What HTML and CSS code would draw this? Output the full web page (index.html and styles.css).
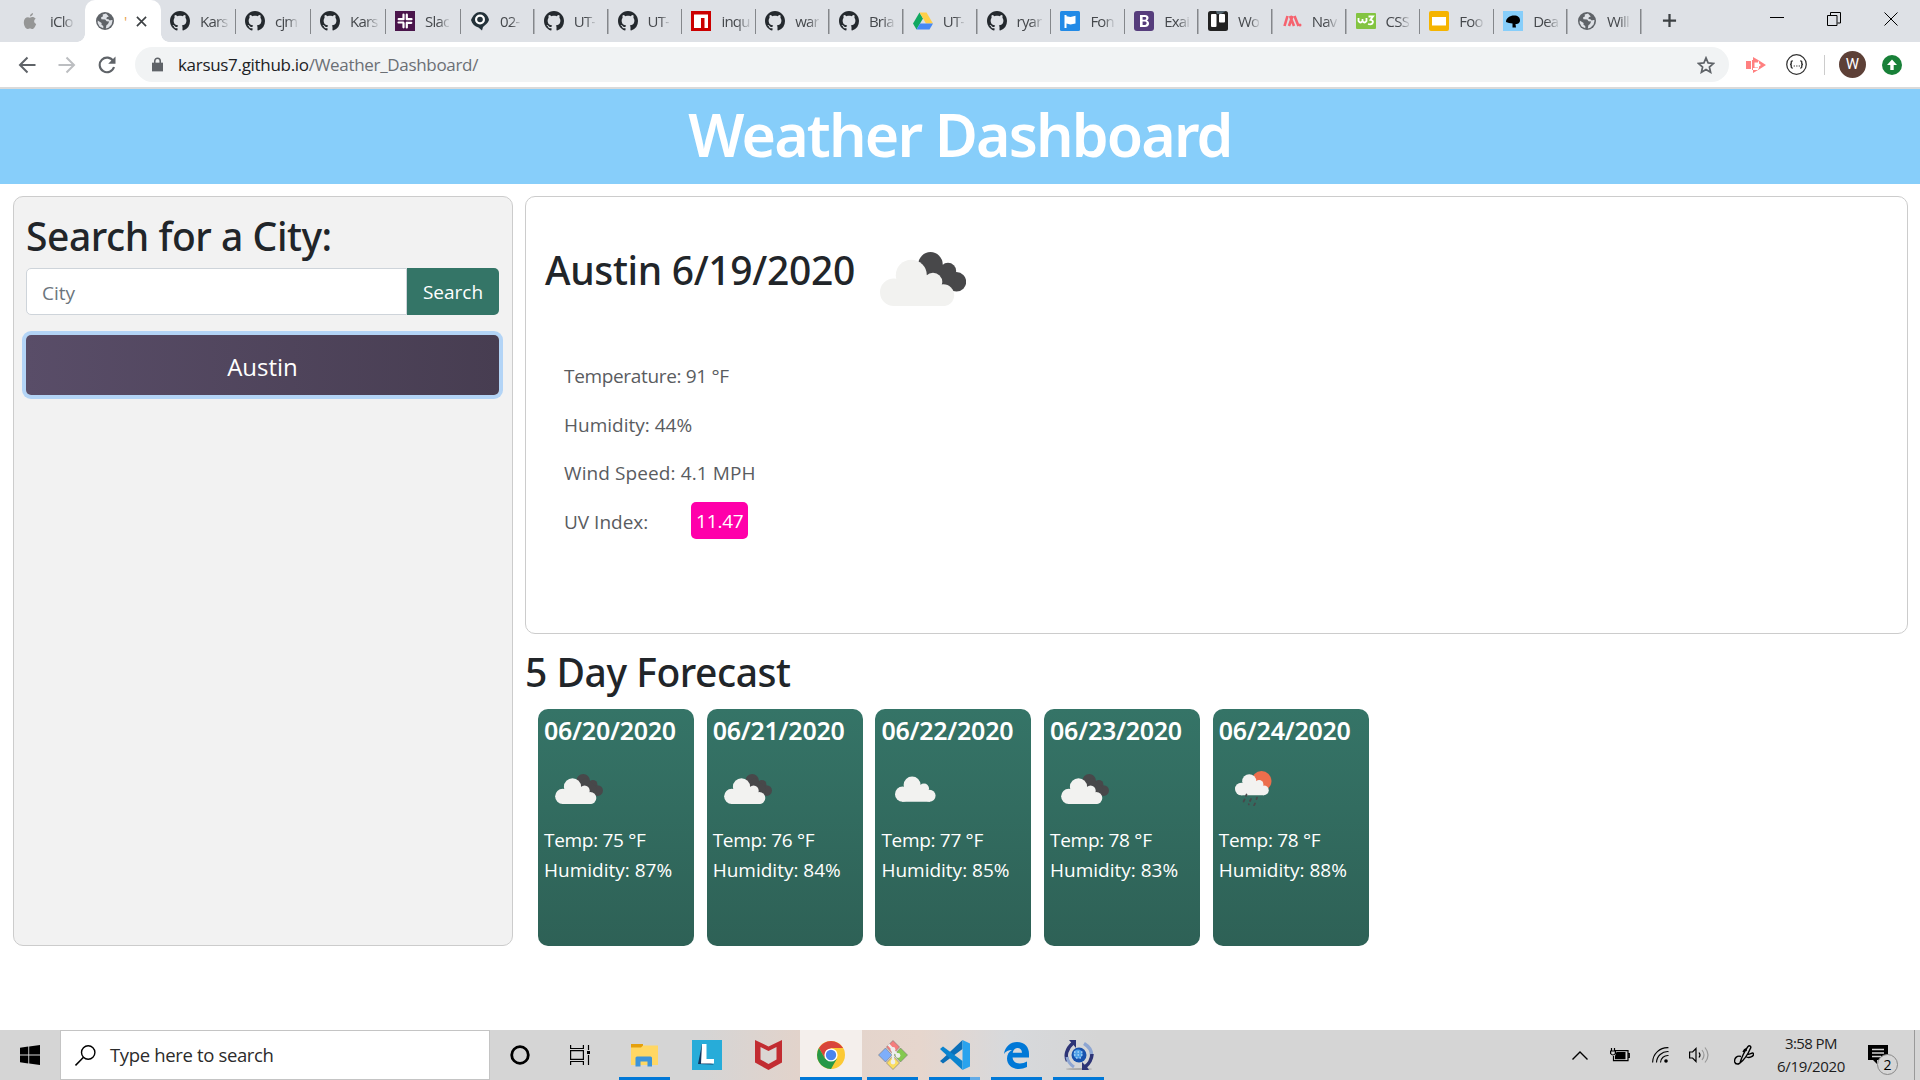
FILE: index.html
```
<!DOCTYPE html>
<html lang="en">
<head>
<meta charset="utf-8">
<title>Weather Dashboard</title>
<link rel="stylesheet" href="styles.css">
</head>
<body>
<svg class="defs" aria-hidden="true">
  <symbol id="github" viewBox="0 0 16 16" preserveAspectRatio="none"><path fill="#24292e" d="M8 0C3.58 0 0 3.58 0 8c0 3.54 2.29 6.53 5.47 7.59.4.07.55-.17.55-.38 0-.19-.01-.82-.01-1.49-2.01.37-2.53-.49-2.69-.94-.09-.23-.48-.94-.82-1.13-.28-.15-.68-.52-.01-.53.63-.01 1.08.58 1.23.82.72 1.21 1.87.87 2.33.66.07-.52.28-.87.51-1.07-1.78-.2-3.64-.89-3.64-3.95 0-.87.31-1.59.82-2.15-.08-.2-.36-1.02.08-2.12 0 0 .67-.21 2.2.82.64-.18 1.32-.27 2-.27s1.36.09 2 .27c1.53-1.04 2.2-.82 2.2-.82.44 1.1.16 1.92.08 2.12.51.56.82 1.27.82 2.15 0 3.07-1.87 3.75-3.65 3.95.29.25.54.73.54 1.48 0 1.07-.01 1.93-.01 2.2 0 .21.15.46.55.38A8.01 8.01 0 0 0 16 8c0-4.42-3.58-8-8-8z"/></symbol>
  <symbol id="globe" viewBox="0 0 20 20"><circle cx="10" cy="10" r="9" fill="#5f6368"/><path fill="#dee1e6" d="M11 2.6 7.6 3.4 8 5.2 6 6.4l.4 1.8 3.8.2 1.4 1.8 2.6.4L13 13l-1.6 1.2-.6 3.2 2.6-.7 3.2-3.2 1-4.2-1.2-.3-1.6.5-1.4-1.3-2-.2.4-1.7 2-.7z"/><path fill="#dee1e6" d="M2.7 9.5 6.6 12l-.1 1.8 1.8 1.2v2.3L4.600 15.500 2.700 12z"/></symbol>
  <symbol id="clouds" viewBox="0 0 86 54">
    <g fill="#48484a"><circle cx="50.500" cy="12.300" r="12.200"/><circle cx="68" cy="19" r="8.200"/><circle cx="76.500" cy="29.800" r="9.700"/><path d="M42 14 56 7 75 24 74 38 60 36z"/></g>
    <use href="#cloudshape"/>
  </symbol>
  <symbol id="cloud" viewBox="0 7.500 75 46.500"><use href="#cloudshape"/></symbol>
  <g id="cloudshape" fill="#f2f2f0"><circle cx="13.800" cy="40.200" r="13.800"/><circle cx="31.300" cy="23.300" r="15.500"/><circle cx="53" cy="30" r="9.300"/><circle cx="63.300" cy="43.200" r="10.900"/><path d="M13 30 30 22 54 24 61 35 64 54H13z"/></g>
  <symbol id="rain" viewBox="0 0 37 35"><circle cx="26.500" cy="10" r="10" fill="#ec6e4c"/><g transform="translate(0 -.3) scale(.455)"><use href="#cloudshape"/></g><path fill="none" stroke="#48484a" stroke-width="1.700" stroke-linecap="round" d="m11.500 23.500-.5 1.400M9.600 28.500l-1 2M16 28l-1 2M22 26.500l-.5 1.600M13.800 33v.5M20 32.500l-1 1.800"/></symbol>
</svg>

<header class="browser">
  <div class="tabs">
    <div class="tab tab-first"><svg viewBox="0 0 20 20"><path fill="#8e8e8e" d="M13.600 0c.1 2-1.500 4-3.600 4C9.800 2.200 11.500.3 13.600 0zM16.700 6.800c-2.700 1.700-2.200 5 .6 6.200-.8 2.300-2.600 5.900-4.500 5.900-1.100 0-1.500-.7-2.800-.7-1.400 0-1.800.7-2.900.7C4.800 18.900 2.700 14.800 2.700 11c0-5.300 4.100-7.300 7.300-5.500 2-1.100 5.100-1 6.700 1.300z"/></svg><span>iClo</span></div>
    <div class="tab active"><svg viewBox="0 0 20 20"><use href="#globe"/></svg><span class="sliver">'</span><svg class="close" viewBox="0 0 12 12"><path stroke="#3c4043" stroke-width="1.800" d="m1 1 10 10M11 1 1 11"/></svg></div>
    <div class="tab w75"><svg><use href="#github"/></svg><span>Kars</span></div>
    <div class="tab w75"><svg><use href="#github"/></svg><span>cjm</span></div>
    <div class="tab w75"><svg><use href="#github"/></svg><span>Kars</span></div>
    <div class="tab w75"><svg viewBox="0 0 20 20"><path fill="#4a154b" d="M0 0h20v20H0z"/><path stroke="#fff" stroke-width="2.200" stroke-linecap="round" d="M8.500 3.500v4.700M11.800 11.800v4.700M3.500 11.500h4.700M11.800 8.200h4.700M8.500 12v4.300M11.800 3.700V8M3.700 8.200H8M12 11.800h4.300"/></svg><span>Slac</span></div>
    <div class="tab"><svg viewBox="0 0 20 20"><path fill="#24323a" d="M10 1c5 0 8 3.500 9 8-1 3.500-4 5-6 7l-1 3.500-3.500-3C5 15.500 2 13 1 9c2-5 5-8 9-8z"/><circle cx="10" cy="8.500" r="5" fill="#fff"/><circle cx="10" cy="8.500" r="2.800" fill="#24323a"/></svg><span>02-</span></div>
    <div class="tab"><svg><use href="#github"/></svg><span>UT-</span></div>
    <div class="tab"><svg><use href="#github"/></svg><span>UT-</span></div>
    <div class="tab"><svg viewBox="0 0 20 20"><path fill="#cb0000" d="M0 0h20v20H0z"/><path fill="#fff" d="M3 3.500h14V17h-3.500V7H10v10H3z"/></svg><span>inqu</span></div>
    <div class="tab"><svg><use href="#github"/></svg><span>war</span></div>
    <div class="tab"><svg><use href="#github"/></svg><span>Bria</span></div>
    <div class="tab"><svg viewBox="0 0 20 20"><path fill="#11a861" d="M6.500 1.500 10 7.500 3.500 18.500 0 12.500z"/><path fill="#ffcf48" d="M6.500 1.500h7l6.500 11h-7z"/><path fill="#4688f4" d="M7 12.500h13l-3.500 6h-13z"/></svg><span>UT-</span></div>
    <div class="tab"><svg><use href="#github"/></svg><span>ryar</span></div>
    <div class="tab"><svg viewBox="0 0 20 20"><rect width="20" height="20" rx="1.500" fill="#228ae6"/><path fill="#fff" d="M4.500 4h2v1.200l4 .8 5-1.200v7.700l-5 1-4-1V17h-2z"/></svg><span>Fon</span></div>
    <div class="tab"><svg viewBox="0 0 20 20"><rect width="20" height="20" rx="3" fill="#563d7c"/><path fill="#fff" fill-rule="evenodd" d="M6 4h5c4.500 0 4.300 4.500 1.800 5.500 3.500 1 3 6.500-1.800 6.500H6zm2.600 2v2.700H11c1.700 0 1.600-2.700 0-2.700zm0 4.600V14H11c2.200 0 2.200-3.400 0-3.400z"/></svg><span>Exai</span></div>
    <div class="tab"><svg viewBox="0 0 20 20"><rect width="20" height="20" rx="2.500" fill="#222"/><path fill="#54646e" d="M8 0h10l-5 3H9z"/><rect x="3" y="3" width="5.500" height="13" rx="1" fill="#fff"/><rect x="11" y="3" width="6" height="8.500" rx="1" fill="#fff"/></svg><span>Wo</span></div>
    <div class="tab"><svg viewBox="0 0 20 20"><path stroke="#f5636f" stroke-width="2.600" d="M5.500 5 2.500 15M8 5l4 10M10.500 5 7 15M12.500 5l4 10"/><circle cx="18" cy="14" r="1.500" fill="#f5636f"/></svg><span>Nav</span></div>
    <div class="tab"><svg viewBox="0 0 20 20"><rect y="2" width="20" height="16" rx="1" fill="#83c441"/><path fill="none" stroke="#fff" stroke-width="1.800" d="M2.500 7v3q2 3 4 0V8v2q2 3 4 0V7M12.500 5.500h4.500l-2.500 3.300c4 .5 3 5.700-2.500 4.200"/></svg><span>CSS</span></div>
    <div class="tab"><svg viewBox="0 0 20 20"><rect width="20" height="20" rx="2" fill="#f5b400"/><path fill="#fff" d="M3 6h14v8.500H3z"/></svg><span>Foo</span></div>
    <div class="tab"><svg viewBox="0 0 20 20"><path fill="#87cefa" d="M0 0h20v20H0z"/><path d="M3 11c0-4 4-6.500 8-6.500s6 2 6 5-3 3.500-4.500 3.500l.5 3.500H9.500V12.500L6 12z"/></svg><span>Dea</span></div>
    <div class="tab"><svg viewBox="0 0 20 20"><use href="#globe"/></svg><span>Will</span></div>
    <svg class="plus" viewBox="0 0 16 16"><path stroke="#3c4043" stroke-width="2.400" d="M8 1v14M1 8h14"/></svg>
    <div class="window-controls">
      <svg viewBox="0 0 14 14"><path stroke="#000" d="M0 5.500h14"/></svg>
      <svg viewBox="0 0 14 14"><path fill="none" stroke="#000" d="M.5 3.500h9.500v10H.5zM3.500 3V.5h10V11H10.500"/></svg>
      <svg viewBox="0 0 14 14"><path stroke="#000" d="m.5.5 13 13m0-13-13 13"/></svg>
    </div>
  </div>
  <div class="toolbar">
    <svg class="nav" viewBox="0 0 18 18"><path fill="none" stroke="#5f6368" stroke-width="2" d="M17.500 9H2M9.500 1.500 2 9l7.500 7.500"/></svg>
    <svg class="nav" viewBox="0 0 18 18"><path fill="none" stroke="#bcbec1" stroke-width="2" d="M.5 9H16M8.500 1.500 16 9l-7.500 7.500"/></svg>
    <svg class="nav" viewBox="0 0 18 18"><path fill="none" stroke="#5f6368" stroke-width="2.100" d="M15.300 5.200A7.300 7.300 0 1 0 16 11"/><path fill="#5f6368" d="M17.500.5v7.300h-7.300z"/></svg>
    <div class="omnibox">
      <svg class="lock" viewBox="0 0 12 15"><path fill="#5f6368" d="M0 5.500h12V15H0z"/><path fill="none" stroke="#5f6368" stroke-width="1.700" d="M3 6V3.600a3 3 0 0 1 6 0V6"/></svg>
      <span class="url">karsus7.github.io<i>/Weather_Dashboard/</i></span>
      <svg class="star" viewBox="0 0 18 18"><path fill="none" stroke="#5f6368" stroke-width="1.700" d="m9 1.900 2.100 5 5.400.5-4.100 3.600 1.200 5.300L9 13.500l-4.600 2.800L5.600 11 1.500 7.400l5.400-.5z"/></svg>
    </div>
    <svg class="ext1" viewBox="0 0 20 16"><path fill="#ff8080" d="M0 4h5v8H0zM6 3h6v2.500H8.500v5H12V13H6zM7 0l6 3.500-1 1.500H7zM7 16l6-3.500-1-1.500H7zM13 3.500 20 8l-7 4.500v-3L15 8l-2-1.500z"/></svg>
    <svg class="ext2" viewBox="0 0 20 20"><circle cx="10" cy="10" r="9.300" fill="none" stroke="#333" stroke-width="1.200"/><path fill="none" stroke="#333" stroke-width="1.300" d="M6.500 6.500Q4.800 6.500 5 8.300T3.800 10Q5.200 10 5 11.700t1.500 1.800M13.500 6.500q1.700 0 1.500 1.800T16.200 10Q14.800 10 15 11.700t-1.500 1.800"/><path stroke="#333" stroke-dasharray="1.200 1.200" d="M7.300 11.500h6"/></svg>
    <span class="separator"></span>
    <span class="avatar">W</span>
    <svg class="update" viewBox="0 0 20 20"><circle cx="10" cy="10" r="10" fill="#188038"/><path fill="#fff" d="m10 4.500 5 5.500h-3.300v5H8.300v-5H5z"/></svg>
  </div>
</header>

<h1 class="banner">Weather Dashboard</h1>

<main class="layout">
  <aside class="search">
    <h2>Search for a City:</h2>
    <div class="input-group"><div class="field">City</div><div class="go">Search</div></div>
    <div class="history">Austin</div>
  </aside>
  <section class="content">
    <div class="current">
      <div class="current-head"><h2>Austin 6/19/2020</h2><svg><use href="#clouds"/></svg></div>
      <ul class="details">
        <li class="temperature">Temperature: 91 °F</li>
        <li>Humidity: 44%</li>
        <li class="wind">Wind Speed: 4.1 MPH</li>
        <li>UV Index: <b class="uv">11.47</b></li>
      </ul>
    </div>
    <h2 class="forecast-title">5 Day Forecast</h2>
    <div class="forecast">
      <article class="day"><h3>06/20/2020</h3><div class="pic"><svg class="clouds"><use href="#clouds"/></svg></div><p>Temp: 75 °F</p><p class="hum">Humidity: 87%</p></article>
      <article class="day"><h3>06/21/2020</h3><div class="pic"><svg class="clouds"><use href="#clouds"/></svg></div><p>Temp: 76 °F</p><p class="hum">Humidity: 84%</p></article>
      <article class="day"><h3>06/22/2020</h3><div class="pic"><svg class="cloud"><use href="#cloud"/></svg></div><p>Temp: 77 °F</p><p class="hum">Humidity: 85%</p></article>
      <article class="day"><h3>06/23/2020</h3><div class="pic"><svg class="clouds"><use href="#clouds"/></svg></div><p>Temp: 78 °F</p><p class="hum">Humidity: 83%</p></article>
      <article class="day"><h3>06/24/2020</h3><div class="pic"><svg class="rain"><use href="#rain"/></svg></div><p>Temp: 78 °F</p><p class="hum">Humidity: 88%</p></article>
    </div>
  </section>
</main>

<footer class="taskbar">
  <div class="start"><svg width="20" height="20" viewBox="0 0 20 20"><path d="m0 2.800 8.300-1.200v8H0zM9.200 1.400 20 0v9.600H9.200zM0 10.500h8.300v8L0 17.300zM9.200 10.500H20V20L9.200 18.600z"/></svg></div>
  <div class="task-search"><svg width="21" height="21" viewBox="0 0 21 21"><circle cx="13.200" cy="7.500" r="6.700" fill="none" stroke="#000" stroke-width="1.400"/><path stroke="#000" stroke-width="1.500" d="m8.500 12.200-8 8.200"/></svg><span>Type here to search</span></div>
  <div class="sys"><svg width="20" height="20" viewBox="0 0 20 20"><circle cx="10" cy="10" r="8.300" fill="none" stroke="#000" stroke-width="2.800"/></svg></div>
  <div class="sys"><svg width="20" height="20" viewBox="0 0 20 20"><path fill="none" stroke="#000" stroke-width="1.200" d="M.6 0v3.500h12.800V0M.6 20v-3.500h12.800V20M.6 5.600h12.800v8.800H.6zM18.500 0v5M18.500 10v10"/><path d="M17 6h3v3h-3z"/></svg></div>
  <div class="app open"><svg width="27" height="24" viewBox="0 0 27 24"><path fill="#e5a00d" d="M0 1h12v5H0z"/><path fill="#ffd764" d="M12 2.500h15V22H0V4.500h10z"/><path fill="#3d94d9" d="M4.500 23.500V15q0-1.500 1.500-1.500h13.500q1.500 0 1.500 1.500v8.500h-4.500v-5h-7v5z"/></svg></div>
  <div class="app"><svg width="30" height="30" viewBox="0 0 30 30"><path fill="#27acd9" d="M0 0h30v30H0z"/><path fill="#10365e" d="m10 4-4 20 16 .5L12 20z"/><path fill="#fff" d="M10 4h4.500v15H22v4.500H9z"/></svg></div>
  <div class="app"><svg width="27" height="30" viewBox="0 0 27 30"><path fill="#c22c31" d="m0 0 13.500 6.500L27 0v22.500L13.500 30 0 22.500z"/><path fill="#dbd6d4" d="m5.500 7 8 4 8-4v12.500l-8 4.500-8-4.500z"/></svg></div>
  <div class="app open current-app"><svg width="28" height="28" viewBox="0 0 28 28"><circle cx="14" cy="14" r="14" fill="#fcc934"/><path fill="#d9453a" d="M1.900 7A14 14 0 0 1 26.100 7H14L8 17.500z"/><path fill="#279847" d="M1.900 7A14 14 0 0 0 14 28l6-10.500H8z"/><circle cx="14" cy="14" r="6.600" fill="#fff"/><circle cx="14" cy="14" r="5.200" fill="#4a84ee"/></svg></div>
  <div class="app open"><svg width="30" height="30" viewBox="0 0 30 30"><g stroke="#777" stroke-width=".6"><path fill="#f57d7d" d="m15 .5 6.500 6.500-6.500 7-6.500-7z"/><path fill="#7eaefa" d="m7.500 8 6.500 7-6.500 7L.5 15z"/><path fill="#84c94f" d="m22.500 8 7 7-7 7-6.500-7z"/><path fill="#fbdd60" d="m15 16 6.500 7-6.500 6.500L8.500 23z"/></g><path fill="none" stroke="#eee" stroke-width="2.400" d="m10.500 4.500 4.500 5v13M15 10l5 5.500"/><g fill="#eee"><circle cx="15" cy="9.500" r="2.400"/><circle cx="20" cy="15.500" r="2.400"/><circle cx="15" cy="22" r="2.400"/></g></svg></div>
  <div class="app open multi"><svg width="30" height="30" viewBox="0 0 30 30"><path fill="#0b6fb8" d="M22.500 0 3 18.500 0 21l3 2.500L22.500 9z"/><path fill="#0b84cf" d="M3 6.500 0 9l22.500 21V21z"/><path fill="#29a3ee" d="m22.500 0 7.500 3.500v23L22.500 30z"/></svg></div>
  <div class="app open"><svg width="25" height="27" viewBox="0 0 25 27"><path fill="#0078d7" d="M0 12C1 4.500 6.500 0 13 0c8 0 12 5.500 12 12v3.500H8.500C9 22 17 23 23 19.500V25C14 29.500 3 26 3 16.500c0-4 2-7 5-8.500-3.500 0-6.500 1.500-8 4zm8.700-1.200H18c0-6.500-8.500-6.500-9.300 0z"/></svg></div>
  <div class="app open"><svg width="30" height="30" viewBox="0 0 30 30"><ellipse cx="15" cy="29" rx="13" ry="1" fill="#aaa"/><path fill="none" stroke="#2d3476" stroke-width="3.500" d="M9 3C2 9 1 16 3.500 21"/><path fill="none" stroke="#8ea6d2" stroke-width="3" d="M3 17q1 6 7 10"/><path fill="#2d3476" d="M5 0h7v8L9.500 5z"/><path fill="none" stroke="#8ea6d2" stroke-width="3.500" d="M20 3.500c5 3 8 8 7.500 13"/><path fill="none" stroke="#2d3476" stroke-width="3.500" d="M28 14q-.5 8-7 13"/><path fill="#2d3476" d="M18 22v8h7l-2-3z"/><circle cx="15" cy="15" r="7.500" fill="#1852ad"/><circle cx="14" cy="14" r="4.500" fill="#4fa1e8"/><path stroke="#d7eeff" stroke-dasharray="1.500 2" d="M10 12h9M10 15h10M12 18h7"/></svg></div>

  <div class="tray">
    <svg width="16" height="9" viewBox="0 0 16 9"><path fill="none" stroke="#000" stroke-width="1.400" d="m.5 8.500 7.500-7.500 7.500 7.500"/></svg>
    <svg width="20" height="14" viewBox="0 0 20 14"><path fill="none" stroke="#000" stroke-width="1.200" d="M5 2.600h13v10H3.500V8M1.500 0v3M4.500 0v3M.6 3h4.800v2.500Q3 8.500.6 5.500zM18 5.500h1.300v4H18"/><path d="M6.500 4h9v7.200H5V8z"/></svg>
    <svg width="17" height="16" viewBox="0 0 17 16"><g fill="none" stroke="#000" stroke-width="1.100"><path d="M.6 15.500A15 15 0 0 1 16.500.7M4.500 15.500A11.300 11.300 0 0 1 16.500 4.600M8.500 15.500a7.300 7.300 0 0 1 8-7"/></g><circle cx="14" cy="14" r="1.800"/></svg>
    <svg width="20" height="18" viewBox="0 0 20 18"><path fill="none" stroke="#000" stroke-width="1.200" d="M.6 6h3L7 2.500v13L3.600 12H.6z"/><path fill="none" stroke="#000" stroke-width="1.200" d="M10 6.500q2 2.500 0 5"/><path fill="none" stroke="#999" stroke-width="1.200" d="M13 4q4 5 0 10M16 1.500q6 7.500 0 15"/></svg>
    <svg width="20" height="20" viewBox="0 0 20 20"><path fill="none" stroke="#000" stroke-width="1.400" d="M6 18c1-4 5-13 8-16.500 1.500-1.500 3.500 0 2.500 1.800C14.500 8 10 15 6 18zM9 7c2-4 4-3.500 3-1M7 11.500C3 10 0 13.500.7 17c.8 3 4.300 2 5.300 1M13 9c2 2 6-3 6.500 0 .3 2-4 5-8 2.500"/></svg>
    <div class="clock"><span>3:58 PM</span><span class="date">6/19/2020</span></div>
    <div class="notify"><svg width="20" height="20" viewBox="0 0 20 20"><path d="M0 0h20v15H9v4l-4-4H0z"/><path stroke="#d5d5d5" stroke-width="1.300" d="M4 4.500h12M4 8h12M4 11.500h9"/></svg><span class="badge">2</span></div>
  </div>
</footer>
</body>
</html>
```
FILE: styles.css
```
* { box-sizing: border-box; }
body { margin: 0; height: 1080px; overflow: hidden; display: flex; flex-direction: column; background: #fff; color: #212529; font: 19px "Open Sans", sans-serif; }
h1, h2, h3, p, ul { margin: 0; padding: 0; }
svg { display: block; flex: none; }
.defs { position: absolute; width: 0; height: 0; }

/* browser window */
.browser { flex: none; height: 89px; border-bottom: 2px solid #dadada; }
.tabs { display: flex; align-items: stretch; height: 42px; background: #dee1e6; }
.tab { flex: none; display: flex; align-items: center; width: 73.800px; padding-left: 9px; background: linear-gradient(#84878b, #84878b) right 9px / 1.5px 25px no-repeat; font-size: 15px; letter-spacing: -.8px; color: #45484c; }
.tab svg { width: 20px; height: 20px; }
.tab span { margin-left: 10px; white-space: nowrap; -webkit-mask-image: linear-gradient(90deg, #000 55%, rgba(0, 0, 0, .15)); mask-image: linear-gradient(90deg, #000 55%, rgba(0, 0, 0, .15)); }
.w75 { width: 75px; }
.tab-first { width: 85px; padding-left: 20px; background: none; }
.tab-first svg { height: 17px; opacity: .9; }
.tab.active { width: 76px; padding-left: 10px; border-radius: 10px 10px 0 0; background: #fff; position: relative; }
.tab.active::before, .tab.active::after { content: ""; position: absolute; bottom: 0; width: 8px; height: 8px; }
.tab.active::before { left: -8px; background: radial-gradient(circle at 0 0, transparent 7.5px, #fff 8px); }
.tab.active::after { right: -8px; background: radial-gradient(circle at 100% 0, transparent 7.5px, #fff 8px); }
.tab .sliver { width: 3px; margin-left: 9px; color: #e8a24c; -webkit-mask-image: none; mask-image: none; }
.tab .close { width: 11px; height: 11px; margin-left: 9px; }
.plus { width: 15px; height: 15px; margin: 13px 0 0 20px; }
.window-controls { display: flex; gap: 43px; margin: 12px 22px 0 auto; }
.window-controls svg { width: 14px; height: 14px; }
.toolbar { display: flex; align-items: center; height: 45px; padding: 0 18px 0 18px; }
.nav { width: 18px; height: 18px; margin-right: 22px; }
.nav:nth-child(3) { margin-right: 19px; }
.omnibox { flex: 1; display: flex; align-items: center; height: 35px; padding: 0 14px 0 17px; border-radius: 18px; background: #f1f3f4; }
.lock { width: 11px; height: 15px; margin-right: 15px; }
.url { font-size: 17px; letter-spacing: -.31px; color: #202124; }
.url i { font-style: normal; color: #6b6f74; }
.star { width: 18px; height: 18px; margin-left: auto; }
.ext1 { width: 20px; height: 16px; margin-left: 17px; }
.ext2 { width: 21px; height: 21px; margin-left: 20px; }
.separator { width: 1px; height: 20px; margin: 0 14px 0 17px; background: #ccc; }
.avatar { width: 27px; height: 27px; margin-right: 16px; border-radius: 50%; background: #5d4037; color: #fff; font: 15px/27px Roboto, sans-serif; text-align: center; }
.update { width: 20px; height: 20px; }

/* page */
h1, h2, h3 { font-family: "Noto Sans", sans-serif; font-weight: 500; }
h2 { font-size: 39px; line-height: 50px; letter-spacing: -.45px; }
.banner { flex: none; height: 95px; padding-bottom: 5px; background: #87cefa; color: #fff; font-size: 59px; font-weight: 600; line-height: 90px; letter-spacing: -1.850px; text-align: center; }
.layout { display: grid; grid-template-columns: 500px 1fr; gap: 12px; height: 762px; padding: 12px 12px 0 13px; }
.search { padding: 14px 13px 14px 12px; border: 1px solid #ccc; border-radius: 10px; background: #f2f2f2; }
.input-group { display: flex; height: 47px; margin-top: 7px; line-height: 48px; }
.field { flex: 1; padding-left: 15px; border: 1px solid #ced4da; border-radius: 5px 0 0 5px; background: #fff; color: #6c757d; }
.go { width: 92px; border-radius: 0 5px 5px 0; background: #347567; color: #fff; line-height: 49px; text-align: center; }
.history { height: 60px; margin-top: 20px; border-radius: 5px; background: linear-gradient(90deg, #594d68, #473d51); box-shadow: 0 0 0 4px #b3d4f6; color: #fff; font-size: 24px; line-height: 63px; text-align: center; }
.content { min-width: 0; }
.current { height: 438px; padding: 48px 19px 0; border: 1px solid #ccc; border-radius: 10px; }
.current-head { display: flex; height: 107px; }
.current-head h2 { width: 335px; letter-spacing: -.33px; }
.current-head svg { width: 86px; height: 54px; margin-top: 7px; }
.details { padding-left: 19px; list-style: none; line-height: 48.700px; color: #5a5c5f; }
.details li { display: flex; align-items: center; height: 48.700px; }
.details .temperature { letter-spacing: -.33px; }
.details .wind { letter-spacing: .1px; }
.uv { width: 57px; height: 37px; margin: -3px 0 0 43px; border-radius: 5px; background: #ff00aa; color: #fff; font-weight: 400; line-height: 39px; letter-spacing: -.2px; text-align: center; }
.forecast-title { margin-top: 13px; }
.forecast { display: flex; gap: 12.700px; margin: 12px 0 0 13px; }
.day { width: 156px; height: 237px; padding: 6px; border-radius: 10px; background: linear-gradient(#357467, #2e6156); color: #fff; line-height: 30px; }
.day h3 { font-size: 25px; font-weight: 600; line-height: 30px; letter-spacing: -.25px; white-space: nowrap; }
.pic { display: flex; align-items: center; height: 80px; padding: 8px 0 0 11px; }
.clouds { width: 48px; height: 30px; }
.cloud { width: 41px; height: 26px; margin-left: 3px; }
.rain { width: 37px; height: 35px; margin-left: 5px; margin-top: -2px; }
.day p { letter-spacing: -.3px; }
.day .hum { letter-spacing: 0; }

/* taskbar */
.taskbar { display: flex; flex: none; height: 50px; margin-top: auto; background: linear-gradient(90deg, #d5d5d5 700px, #e2d3cb 800px, #e6d6cd 920px, #d7d9dc 1010px, #d5d5d5 1100px); }
.start { display: grid; place-items: center; width: 60px; }
.task-search { display: flex; align-items: center; width: 430px; padding-left: 14px; border: 1px solid #c4c4c4; background: #fff; color: #2b2b2b; font-size: 18.500px; letter-spacing: -.35px; }
.task-search span { margin: -2px 0 0 14px; }
.sys { display: grid; place-items: center; width: 60px; }
.sys + .app { margin-left: 3.500px; }
.app { position: relative; display: grid; place-items: center; width: 62px; }
.open::after { content: ""; position: absolute; bottom: 0; left: 5px; width: 51px; height: 3px; background: #0078d7; }
.current-app { background: #f4efec; }
.current-app::after { left: 0; width: 62px; }
.multi::after { background: linear-gradient(90deg, #0078d7 80%, #63abe6 80%); }
.tray { display: flex; align-items: center; margin: 0 5px 0 auto; width: 343px; border-right: 1px solid #999; }
.tray > svg { margin-right: 22px; }
.tray > svg:nth-of-type(3) { margin-right: 20px; }
.tray > svg:nth-of-type(4) { margin-right: 25px; }
.tray > svg:nth-of-type(5) { margin-right: 18px; }
.clock { width: 78px; color: #1c1c1c; font-size: 15px; line-height: 23px; text-align: center; }
.clock span { display: block; letter-spacing: -.6px; }
.clock .date { letter-spacing: -.35px; }
.notify { position: relative; margin-left: 18px; }
.badge { position: absolute; left: 9px; top: 9px; width: 21px; height: 21px; border: 1px solid #888; border-radius: 50%; background: #d5d5d5; color: #000; font-size: 14px; line-height: 20px; text-align: center; }
```
